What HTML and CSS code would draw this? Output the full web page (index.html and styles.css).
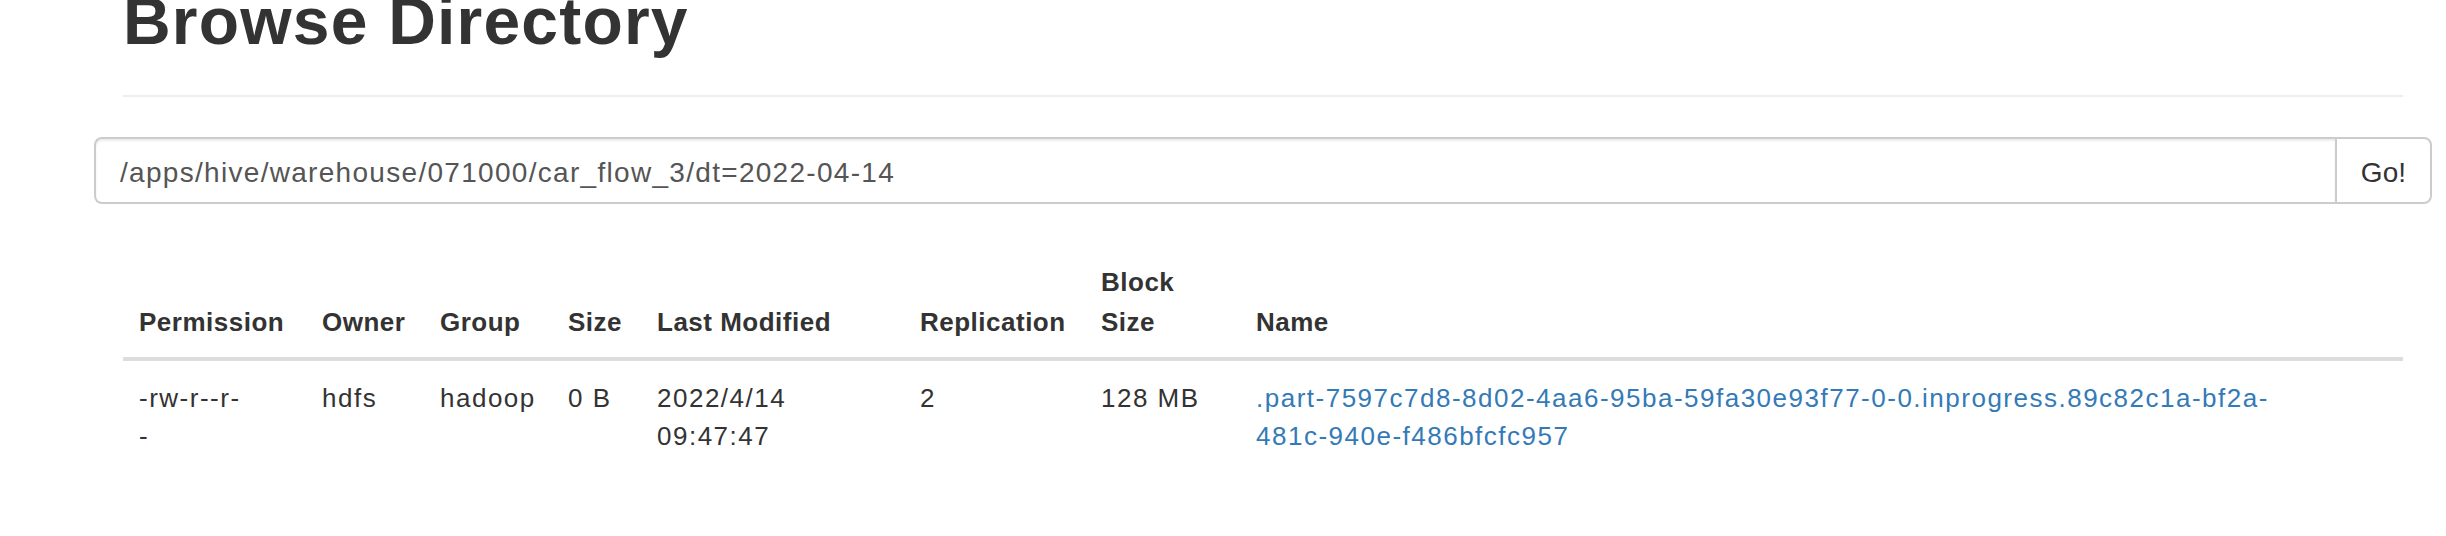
FILE: index.html
```html
<!DOCTYPE html>
<html>
<head>
<meta charset="utf-8">
<title>Browse Directory</title>
<link rel="stylesheet" href="styles.css">
</head>
<body>
<div class="container">
  <div class="page-header">
    <h1>Browse Directory</h1>
  </div>
  <div class="row">
    <form class="input-group" onsubmit="return false;">
      <input type="text" class="form-control" value="/apps/hive/warehouse/071000/car_flow_3/dt=2022-04-14">
      <button class="btn" type="button">Go!</button>
    </form>
  </div>
  <table class="table">
    <colgroup>
      <col class="c-perm">
      <col class="c-owner">
      <col class="c-group">
      <col class="c-size">
      <col class="c-mod">
      <col class="c-repl">
      <col class="c-block">
      <col class="c-name">
    </colgroup>
    <thead>
      <tr>
        <th>Permission</th>
        <th>Owner</th>
        <th>Group</th>
        <th>Size</th>
        <th>Last Modified</th>
        <th>Replication</th>
        <th>Block Size</th>
        <th>Name</th>
      </tr>
    </thead>
    <tbody>
      <tr>
        <td class="perm">-rw-r--r-<wbr>-</td>
        <td>hdfs</td>
        <td>hadoop</td>
        <td>0 B</td>
        <td>2022/4/14 09:47:47</td>
        <td>2</td>
        <td>128 MB</td>
        <td class="name"><a href="#">.part-7597c7d8-8d02-4aa6-95ba-59fa30e93f77-0-0.inprogress.89c82c1a-bf2a-<wbr>481c-940e-f486bfcfc957</a></td>
      </tr>
    </tbody>
  </table>
</div>
</body>
</html>
```

FILE: styles.css
```css
html, body {
  margin: 0;
  padding: 0;
  background: #fff;
  overflow: hidden;
}

body {
  font-family: "Liberation Sans", Arial, Helvetica, sans-serif;
  color: #333;
}

.container {
  box-sizing: border-box;
  width: 2338px;
  margin-left: 94px;
  padding: 0 29px;
}

.page-header {
  margin-top: -19px;
  padding-bottom: 34px;
  border-bottom: 2px solid #eee;
  margin-bottom: 40px;
}

.page-header h1 {
  margin: 0;
  font-size: 66px;
  line-height: 80px;
  font-weight: bold;
  letter-spacing: 1.2px;
  color: #333;
}

.row {
  margin: 0 -29px;
}

.input-group {
  display: flex;
  margin: 0;
  height: 67px;
}

.form-control {
  flex: 1;
  box-sizing: border-box;
  height: 67px;
  margin: 0;
  padding: 4px 24px 0 24px;
  border: 2px solid #ccc;
  border-right: 0;
  border-radius: 8px 0 0 8px;
  box-shadow: inset 0 2px 2px rgba(0, 0, 0, 0.075);
  font-family: "Liberation Sans", Arial, Helvetica, sans-serif;
  font-size: 28px;
  letter-spacing: 1.3px;
  color: #555;
  background: #fff;
  outline: none;
}

.btn {
  box-sizing: border-box;
  height: 67px;
  margin: 0;
  padding: 4px 24px 0 24px;
  border: 2px solid #ccc;
  border-radius: 0 8px 8px 0;
  background: #fff;
  font-family: "Liberation Sans", Arial, Helvetica, sans-serif;
  font-size: 28px;
  color: #333;
}

.table {
  width: 100%;
  margin-top: 42px;
  table-layout: fixed;
  border-collapse: separate;
  border-spacing: 0;
}

.c-perm { width: 183px; }
.c-owner { width: 118px; }
.c-group { width: 128px; }
.c-size { width: 89px; }
.c-mod { width: 263px; }
.c-repl { width: 181px; }
.c-block { width: 155px; }

.table th {
  text-align: left;
  vertical-align: bottom;
  padding: 16px 16px 15px 16px;
  font-size: 26px;
  line-height: 40px;
  font-weight: bold;
  letter-spacing: 0.5px;
  border-bottom: 4px solid #ddd;
}

.table td {
  vertical-align: top;
  padding: 18px 16px 16px 16px;
  font-size: 26px;
  line-height: 38px;
  letter-spacing: 1.5px;
}

.table td.perm {
  padding-right: 61px;
}

.table td.name {
  padding-right: 97px;
}

.table a {
  color: #337ab7;
  text-decoration: none;
}
```
